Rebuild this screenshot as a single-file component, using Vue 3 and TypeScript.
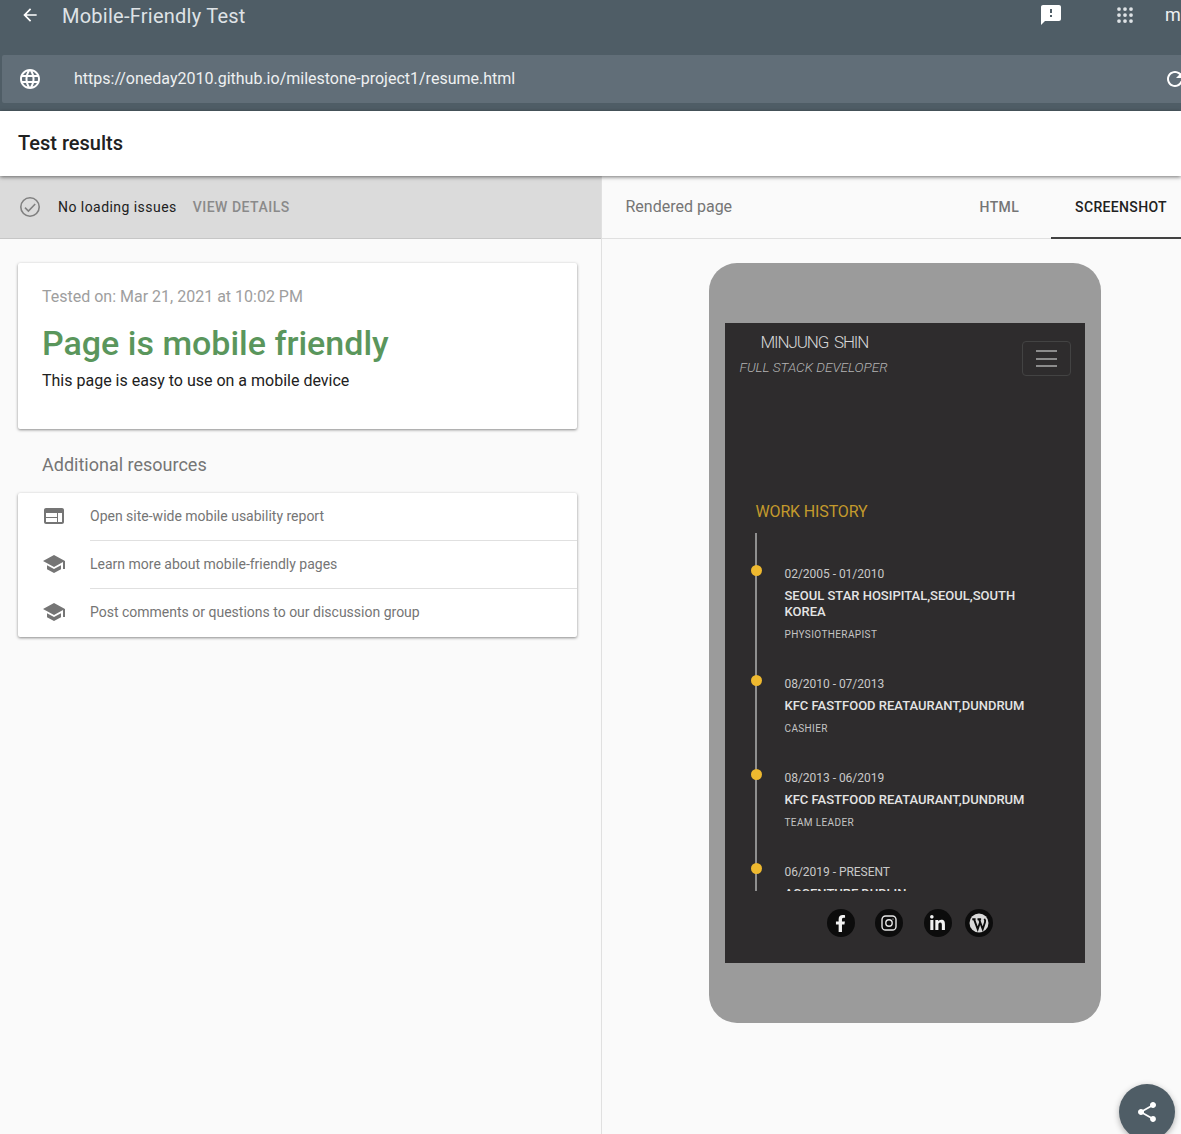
<script setup lang="ts">
interface Job { date: string; name: string; role: string }
interface Resource { text: string; icon: string }

const webIcon = 'M20 4H4c-1.1 0-1.99.9-1.99 2L2 18c0 1.1.9 2 2 2h16c1.1 0 2-.9 2-2V6c0-1.1-.9-2-2-2zm-5 14H4v-4h11v4zm0-5H4V9h11v4zm5 5h-4V9h4v9z'
const schoolIcon = 'M5 13.18v4L12 21l7-3.82v-4L12 17l-7-3.82zM12 3L1 9l11 6 9-4.91V17h2V9L12 3z'

const resources: Resource[] = [
  { text: 'Open site-wide mobile usability report', icon: webIcon },
  { text: 'Learn more about mobile-friendly pages', icon: schoolIcon },
  { text: 'Post comments or questions to our discussion group', icon: schoolIcon },
]

const jobs: Job[] = [
  { date: '02/2005 - 01/2010', name: 'SEOUL STAR HOSIPITAL,SEOUL,SOUTH KOREA', role: 'PHYSIOTHERAPIST' },
  { date: '08/2010 - 07/2013', name: 'KFC FASTFOOD REATAURANT,DUNDRUM', role: 'CASHIER' },
  { date: '08/2013 - 06/2019', name: 'KFC FASTFOOD REATAURANT,DUNDRUM', role: 'TEAM LEADER' },
  { date: '06/2019 - PRESENT', name: 'ACCENTURE,DUBLIN', role: 'ANALYST' },
]

const dots: number[] = [4, 12, 20]
</script>

<template>
  <div class="page">
    <header class="app-bar">
      <div class="top-row">
        <svg class="back" viewBox="0 0 24 24"><path d="M20 11H7.83l5.59-5.59L12 4l-8 8 8 8 1.41-1.41L7.83 13H20v-2z" /></svg>
        <span class="app-title">Mobile-Friendly Test</span>
        <svg class="feedback" viewBox="0 0 24 24"><path d="M20 2H4c-1.1 0-1.99.9-1.99 2L2 22l4-4h14c1.1 0 2-.9 2-2V4c0-1.1-.9-2-2-2zm-7 12h-2v-2h2v2zm0-4h-2V6h2v4z" /></svg>
        <svg class="apps" viewBox="0 0 24 24">
          <template v-for="y in dots" :key="y">
            <circle v-for="x in dots" :key="x" :cx="x" :cy="y" r="2.5" />
          </template>
        </svg>
        <span class="account">m</span>
      </div>
      <div class="url-bar">
        <svg class="globe" viewBox="0 0 24 24"><path d="M11.99 2C6.47 2 2 6.48 2 12s4.47 10 9.99 10C17.52 22 22 17.52 22 12S17.52 2 11.99 2zm6.93 6h-2.95c-.32-1.25-.78-2.45-1.38-3.56 1.84.63 3.37 1.91 4.33 3.56zM12 4.04c.83 1.2 1.48 2.53 1.91 3.96h-3.82c.43-1.43 1.08-2.76 1.91-3.96zM4.26 14C4.1 13.36 4 12.69 4 12s.1-1.36.26-2h3.38c-.08.66-.14 1.32-.14 2 0 .68.06 1.34.14 2H4.26zm.82 2h2.95c.32 1.25.78 2.45 1.38 3.56-1.84-.63-3.37-1.9-4.33-3.56zm2.95-8H5.08c.96-1.66 2.49-2.93 4.33-3.56C8.81 5.55 8.35 6.75 8.03 8zM12 19.96c-.83-1.2-1.48-2.53-1.91-3.96h3.82c-.43 1.43-1.08 2.76-1.91 3.96zM14.34 14H9.66c-.09-.66-.16-1.32-.16-2 0-.68.07-1.35.16-2h4.68c.09.65.16 1.32.16 2 0 .68-.07 1.34-.16 2zm.25 5.56c.6-1.11 1.06-2.31 1.38-3.56h2.95c-.96 1.65-2.49 2.93-4.33 3.56zM16.36 14c.08-.66.14-1.32.14-2 0-.68-.06-1.34-.14-2h3.38c.16.64.26 1.31.26 2s-.1 1.36-.26 2h-3.38z" /></svg>
        <span class="url">https://oneday2010.github.io/milestone-project1/resume.html</span>
        <svg class="reload" viewBox="0 0 24 24"><path d="M17.65 6.35C16.2 4.9 14.21 4 12 4c-4.42 0-7.99 3.58-7.99 8s3.57 8 7.99 8c3.73 0 6.84-2.55 7.73-6h-2.08c-.82 2.33-3.04 4-5.65 4-3.31 0-6-2.69-6-6s2.69-6 6-6c1.66 0 3.14.69 4.22 1.78L13 11h7V4l-2.35 2.35z" /></svg>
      </div>
    </header>

    <div class="results-head">Test results</div>

    <main class="columns">
      <section class="left">
        <div class="status-bar">
          <svg class="check" viewBox="0 0 24 24">
            <circle cx="12" cy="12" r="9.2" fill="none" stroke="#808080" stroke-width="1.6" />
            <path d="M7 12.6l3.4 3.4 6.800-7" fill="none" stroke="#808080" stroke-width="1.6" />
          </svg>
          <span class="status-text">No loading issues</span>
          <span class="view-details">VIEW DETAILS</span>
        </div>

        <div class="left-body">
          <article class="card verdict">
            <p class="tested">Tested on: Mar 21, 2021 at 10:02 PM</p>
            <h1 class="friendly">Page is mobile friendly</h1>
            <p class="easy">This page is easy to use on a mobile device</p>
          </article>

          <h2 class="resources-title">Additional resources</h2>

          <ul class="card resources">
            <li v-for="r in resources" :key="r.text" class="resource">
              <svg class="resource-icon" viewBox="0 0 24 24"><path :d="r.icon" /></svg>
              <span class="resource-text">{{ r.text }}</span>
            </li>
          </ul>
        </div>
      </section>

      <section class="right">
        <div class="tabs-bar">
          <span class="rendered">Rendered page</span>
          <span class="tab">HTML</span>
          <span class="tab active">SCREENSHOT</span>
        </div>

        <div class="right-body">
          <div class="phone">
            <div class="screen">
              <div class="site-head">
                <div>
                  <div class="site-name">MINJUNG SHIN</div>
                  <div class="site-sub">FULL STACK DEVELOPER</div>
                </div>
                <div class="burger"><i></i><i></i><i></i></div>
              </div>

              <h3 class="work">WORK HISTORY</h3>

              <div class="timeline-clip">
                <div class="timeline">
                  <div v-for="(j, i) in jobs" :key="i" class="job">
                    <span class="dot"></span>
                    <div class="job-date">{{ j.date }}</div>
                    <div class="job-name">{{ j.name }}</div>
                    <div class="job-role">{{ j.role }}</div>
                  </div>
                </div>
              </div>

              <div class="socials">
                <span class="social s-fb">
                  <svg viewBox="0 0 320 512" width="11" height="17"><path fill="#f2f2f2" d="M279.14 288l14.22-92.66h-88.91v-60.13c0-25.35 12.42-50.06 52.24-50.06h40.42V6.26S260.43 0 225.36 0c-73.22 0-121.08 44.38-121.08 124.72v70.62H22.89V288h81.39v224h100.17V288z" /></svg>
                </span>
                <span class="social s-ig">
                  <svg viewBox="0 0 16 16" width="16" height="16" fill="none" stroke="#e6e6e6" stroke-width="1.400">
                    <rect x="1" y="1" width="14" height="14" rx="3.600" />
                    <circle cx="8" cy="8" r="3.200" />
                    <circle cx="12" cy="4" r=".6" fill="#e6e6e6" stroke="none" />
                  </svg>
                </span>
                <span class="social s-in">
                  <svg viewBox="0 0 448 512" width="15" height="17"><path fill="#f2f2f2" d="M100.280 448H7.400V148.900h92.880zM53.790 108.100C24.090 108.100 0 83.500 0 53.800a53.790 53.790 0 0 1 107.580 0c0 29.700-24.100 54.300-53.790 54.300zM447.900 448h-92.680V302.400c0-34.700-.7-79.200-48.290-79.200-48.290 0-55.690 37.700-55.690 76.700V448h-92.780V148.900h89.080v40.800h1.300c12.400-23.500 42.690-48.300 87.880-48.300 94 0 111.280 61.900 111.280 142.300V448z" /></svg>
                </span>
                <span class="social s-wp">
                  <svg viewBox="0 0 20 20" width="20" height="20">
                    <circle cx="10" cy="10" r="9.500" fill="#d9d9d9" />
                    <path fill="none" stroke="#0c0c0c" stroke-width="1.900" d="M3.300 6.200h3.300M5 6.200l3.700 10 2.200-6.500M8.500 6.200h3.600M10 6.200l3.700 10 2.300-7c.5-1.600-.2-2.800-.7-3.300" />
                  </svg>
                </span>
              </div>
            </div>
          </div>
        </div>
      </section>
    </main>

    <button class="fab" type="button" aria-label="Share">
      <svg viewBox="0 0 24 24" width="24" height="24"><path fill="#fff" d="M18 16.080c-.76 0-1.440.3-1.960.77L8.910 12.700c.05-.23.09-.46.09-.7s-.04-.47-.09-.7l7.050-4.110c.54.5 1.250.81 2.040.81 1.660 0 3-1.340 3-3s-1.340-3-3-3-3 1.340-3 3c0 .24.04.47.09.7L8.040 9.810C7.500 9.310 6.790 9 6 9c-1.660 0-3 1.340-3 3s1.340 3 3 3c.79 0 1.500-.31 2.040-.81l7.120 4.160c-.05.21-.08.43-.08.65 0 1.610 1.310 2.920 2.920 2.920 1.610 0 2.920-1.310 2.920-2.920s-1.310-2.920-2.920-2.920z" /></svg>
    </button>
  </div>
</template>

<style scoped>
.page {
  position: relative;
  width: 1181px;
  height: 1134px;
  overflow: hidden;
  display: flex;
  flex-direction: column;
  background: #fafafa;
  font-family: Roboto, "Liberation Sans", sans-serif;
}

.app-bar {
  flex: none;
  height: 111px;
  background: #4f5d66;
  overflow: hidden;
}

.top-row {
  height: 55px;
  display: flex;
  align-items: flex-start;
  width: 1220px;
}

.back {
  width: 20px;
  height: 20px;
  margin: 5px 0 0 20px;
  fill: #fff;
}

.app-title {
  margin-left: 22px;
  font-size: 20px;
  line-height: 32px;
  color: #dfe3e6;
  letter-spacing: 0.25px;
}

.feedback {
  width: 24px;
  height: 24px;
  margin: 3px 0 0 auto;
  fill: #fff;
}

.apps {
  width: 18px;
  height: 18px;
  margin: 6px 0 0 53px;
  fill: #dfe3e6;
}

.account {
  margin: 0 39px 0 31px;
  font-size: 18px;
  line-height: 30px;
  color: #eef0f1;
  width: 16px;
}

.url-bar {
  height: 48px;
  margin-left: 2px;
  width: 1200px;
  display: flex;
  align-items: center;
  background: #616e78;
  border-radius: 2px;
}

.globe {
  width: 24px;
  height: 24px;
  margin-left: 16px;
  fill: #fff;
}

.url {
  margin: 0 0 2px 32px;
  font-size: 16px;
  color: #eef0f1;
}

.reload {
  width: 24px;
  height: 24px;
  margin-left: auto;
  margin-right: 15px;
  fill: #fff;
}

.results-head {
  position: relative;
  z-index: 2;
  flex: none;
  height: 65px;
  padding-left: 18px;
  background: #fff;
  box-shadow: 0 1px 4px rgba(0, 0, 0, 0.55);
  font-size: 20px;
  font-weight: 500;
  line-height: 65px;
  color: #212121;
}

.columns {
  flex: 1;
  display: flex;
  min-height: 0;
}

.left {
  flex: none;
  width: 602px;
  border-right: 1px solid #e0e0e0;
  box-sizing: border-box;
}

.status-bar {
  height: 63px;
  box-sizing: border-box;
  display: flex;
  align-items: center;
  padding-left: 18px;
  background: #dbdbdb;
  border-bottom: 1px solid #c6c6c6;
}

.check {
  width: 24px;
  height: 24px;
}

.status-text {
  margin-left: 16px;
  font-size: 14px;
  color: #212121;
  letter-spacing: 0.45px;
}

.view-details {
  margin-left: 16px;
  font-size: 14px;
  font-weight: 500;
  color: #8a8a8a;
  letter-spacing: 0.5px;
}

.left-body {
  padding: 24px 24px 0 18px;
}

.card {
  background: #fff;
  border-radius: 2px;
  box-shadow: 0 1px 3px rgba(0, 0, 0, 0.45);
}

.verdict {
  height: 166px;
  box-sizing: border-box;
  padding: 24px 24px 0;
}

.tested {
  margin: 0;
  font-size: 16px;
  line-height: 20px;
  color: #9e9e9e;
}

.friendly {
  margin: 12px 0 0;
  font-size: 34px;
  line-height: 48px;
  font-weight: 500;
  color: #5a965c;
}

.easy {
  margin: 2px 0 0;
  font-size: 16px;
  line-height: 24px;
  color: #212121;
}

.resources-title {
  margin: 24px 0 16px 24px;
  font-size: 18px;
  line-height: 24px;
  font-weight: 400;
  color: #757575;
}

.resources {
  margin: 0;
  padding: 0;
  list-style: none;
}

.resource {
  height: 48px;
  display: flex;
  align-items: center;
  padding-left: 24px;
}

.resource-icon {
  flex: none;
  width: 24px;
  height: 24px;
  margin-bottom: 3px;
  fill: #757575;
}

.resource-text {
  flex: 1;
  align-self: stretch;
  display: flex;
  align-items: center;
  margin-left: 24px;
  padding-bottom: 2px;
  font-size: 14px;
  color: #757575;
}

.resource:not(:last-child) .resource-text {
  border-bottom: 1px solid #e0e0e0;
}

.right {
  flex: 1;
  min-width: 0;
}

.tabs-bar {
  height: 63px;
  box-sizing: border-box;
  display: flex;
  align-items: center;
  padding-left: 23.5px;
  border-bottom: 1px solid #e0e0e0;
}

.rendered {
  margin: 0 auto 2px 0;
  font-size: 16px;
  color: #757575;
}

.tab {
  align-self: stretch;
  display: flex;
  align-items: center;
  padding: 0 13px 0 24px;
  margin-right: 19px;
  font-size: 14px;
  font-weight: 500;
  letter-spacing: 0.35px;
  color: #757575;
}

.tab.active {
  margin: 0 0 -1px;
  padding: 0 14px 0 24px;
  color: #212121;
  border-bottom: 2px solid #424242;
  box-sizing: border-box;
}

.right-body {
  padding-top: 24px;
  display: flex;
  justify-content: center;
  padding-left: 26px;
}

.phone {
  width: 392px;
  height: 760px;
  box-sizing: border-box;
  padding: 60px 16px;
  background: #9b9b9b;
  border-radius: 28px;
}

.screen {
  height: 640px;
  display: flex;
  flex-direction: column;
  background: #2e2c2d;
}

.site-head {
  height: 141px;
  flex: none;
  box-sizing: border-box;
  display: flex;
  justify-content: space-between;
  align-items: flex-start;
  padding: 9px 14px 0 15px;
}

.site-name {
  padding-left: 21px;
  font-size: 17px;
  line-height: 20px;
  font-weight: 300;
  letter-spacing: -1.1px;
  word-spacing: 2.5px;
  color: #d6d6d6;
}

.site-sub {
  margin-top: 7px;
  font-size: 13.6px;
  line-height: 16px;
  font-style: italic;
  font-weight: 300;
  color: #b4b4b4;
}

.burger {
  width: 49px;
  height: 35px;
  margin-top: 9px;
  box-sizing: border-box;
  display: flex;
  flex-direction: column;
  align-items: center;
  justify-content: center;
  gap: 5.5px;
  border: 1px solid #434343;
  border-radius: 4px;
}

.burger i {
  display: block;
  width: 21px;
  height: 2px;
  background: #8c8c8c;
}

.work {
  flex: none;
  margin: 38px 0 0 31px;
  font-size: 16px;
  line-height: 19px;
  font-weight: 400;
  letter-spacing: -0.15px;
  color: #c39a2c;
}

.timeline-clip {
  flex: none;
  height: 358px;
  margin: 12px 0 0 24px;
  padding-left: 6px;
  overflow: hidden;
}

.timeline {
  height: 358px;
  box-sizing: border-box;
  padding-top: 33px;
  border-left: 2px solid #8f8f8f;
}

.job {
  position: relative;
  padding-left: 28px;
  margin-bottom: 33px;
}

.dot {
  position: absolute;
  left: -6px;
  top: -1px;
  width: 11px;
  height: 11px;
  border-radius: 50%;
  background: #eeb92f;
}

.job-date {
  font-size: 12px;
  line-height: 16px;
  letter-spacing: -0.03px;
  color: #c9c9c9;
}

.job-name {
  margin-top: 6px;
  width: 245px;
  font-size: 13px;
  line-height: 16px;
  font-weight: 500;
  color: #e4e4e4;
}

.job-role {
  margin-top: 7px;
  font-size: 10px;
  line-height: 16px;
  letter-spacing: 0.38px;
  color: #c4c4c4;
}

.socials {
  flex: none;
  display: flex;
  margin: 18px 0 0 102px;
}

.social {
  width: 28px;
  height: 28px;
  flex: none;
  display: flex;
  align-items: center;
  justify-content: center;
  border-radius: 50%;
  background: #0c0c0c;
}

.s-fb { margin-right: 20px; }
.s-ig { margin-right: 21px; }
.s-in { margin-right: 13px; }

.fab {
  position: absolute;
  left: 1119px;
  top: 1084px;
  width: 56px;
  height: 56px;
  padding: 0;
  border: 0;
  border-radius: 50%;
  background: #4f5d66;
  display: flex;
  align-items: center;
  justify-content: center;
  box-shadow: 0 2px 6px rgba(0, 0, 0, 0.3);
}
</style>

<style>
html, body {
  margin: 0;
  overflow: hidden;
}
</style>
